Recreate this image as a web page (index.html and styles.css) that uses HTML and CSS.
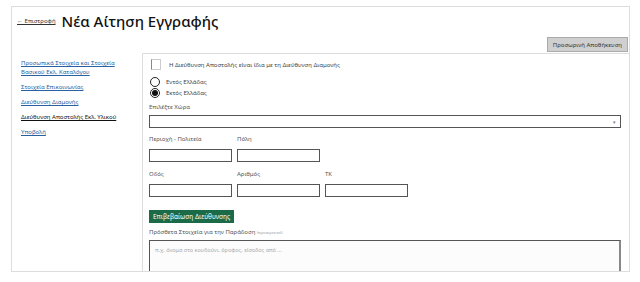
FILE: index.html
```html
<!DOCTYPE html>
<html lang="el">
<head>
  <meta charset="UTF-8">
  <title>Νέα Αίτηση Εγγραφής</title>
  <link rel="stylesheet" href="styles.css">
</head>
<body>
  <div class="pagina">
    <div class="cabecera">
      <a class="volver" href="#">← Επιστροφή</a>
      <h1>Νέα Αίτηση Εγγραφής</h1>
    </div>
    <div class="acciones">
      <button class="guardar" type="button">Προσωρινή Αποθήκευση</button>
    </div>
    <div class="cuerpo">
      <nav class="menu">
        <a href="#">Προσωπικά Στοιχεία και Στοιχεία<br>Βασικού Εκλ. Καταλόγου</a>
        <a href="#">Στοιχεία Επικοινωνίας</a>
        <a href="#">Διεύθυνση Διαμονής</a>
        <a href="#" class="activo">Διεύθυνση Αποστολής Εκλ. Υλικού</a>
        <a href="#">Υποβολή</a>
      </nav>
      <form class="formulario">
        <label class="opcion">
          <span class="casilla"></span>
          Η Διεύθυνση Αποστολής είναι ίδια με τη Διεύθυνση Διαμονής
        </label>
        <label class="opcion">
          <span class="radio"></span>
          Εντός Ελλάδας
        </label>
        <label class="opcion">
          <span class="radio marcado"></span>
          Εκτός Ελλάδας
        </label>

        <div class="etiqueta">Επιλέξτε Χώρα</div>
        <div class="selector"><span class="flecha">▾</span></div>

        <div class="fila">
          <div class="campo">
            <div class="etiqueta">Περιοχή - Πολιτεία</div>
            <div class="caja"></div>
          </div>
          <div class="campo">
            <div class="etiqueta">Πόλη</div>
            <div class="caja"></div>
          </div>
        </div>

        <div class="fila">
          <div class="campo">
            <div class="etiqueta">Οδός</div>
            <div class="caja"></div>
          </div>
          <div class="campo">
            <div class="etiqueta">Αριθμός</div>
            <div class="caja"></div>
          </div>
          <div class="campo">
            <div class="etiqueta">ΤΚ</div>
            <div class="caja"></div>
          </div>
        </div>

        <button class="confirmar" type="button">Επιβεβαίωση Διεύθυνσης</button>

        <div class="etiqueta">Πρόσθετα Στοιχεία για την Παράδοση <small>(προαιρετικό)</small></div>
        <div class="texto">π.χ. όνομα στο κουδούνι, όροφος, είσοδος από ...</div>
      </form>
    </div>
  </div>
</body>
</html>
```

FILE: styles.css
```css
body {
  margin: 0;
  font-family: "Noto Sans", sans-serif;
  color: #222;
  background: #fff;
}

.pagina {
  margin: 6px 0 0 11px;
  width: 619px;
  height: 266px;
  border: 1px solid #ddd;
  overflow: hidden;
  box-sizing: border-box;
}

.cabecera {
  display: flex;
  align-items: center;
  padding: 2px 0 0 5px;
  height: 24px;
}

.volver {
  font-size: 6px;
  color: #333;
  margin-right: 6px;
}

h1 {
  margin: 0;
  font-size: 15px;
  font-weight: 500;
  color: #111;
}

.acciones {
  display: flex;
  justify-content: flex-end;
  padding: 4px 1px 0 0;
}

.guardar {
  font-family: inherit;
  font-size: 6px;
  color: #333;
  background: #cfcfcf;
  border: 1px solid #aaa;
  height: 15px;
  padding: 0 5px;
}

.cuerpo {
  display: flex;
  margin-top: 1px;
}

.menu {
  width: 130px;
  flex: none;
  padding: 6px 0 0 9px;
  box-sizing: border-box;
  display: flex;
  flex-direction: column;
  gap: 6px;
}

.menu a {
  font-size: 6px;
  line-height: 9px;
  color: #2a5fa0;
}

.menu a.activo {
  color: #111;
}

.formulario {
  flex: 1;
  border-top: 1px solid #ddd;
  border-left: 1px solid #ddd;
  padding: 5px 8px 0 6px;
  font-size: 6px;
}

.opcion {
  display: flex;
  align-items: center;
  gap: 6px;
  height: 11px;
  color: #444;
}

.opcion:first-child {
  margin-bottom: 6px;
}

.casilla {
  width: 8px;
  height: 9px;
  border: 1px solid #ccc;
  border-left-color: #888;
  margin: 0 2px;
}

.radio {
  width: 8px;
  height: 8px;
  border: 1px solid #222;
  border-radius: 50%;
  margin-left: 1px;
  display: flex;
  align-items: center;
  justify-content: center;
}

.radio.marcado::after {
  content: "";
  width: 6px;
  height: 6px;
  border-radius: 50%;
  background: #111;
}

.etiqueta {
  color: #555;
  font-size: 6px;
  margin: 5px 0 4px;
}

.etiqueta small {
  font-size: 4px;
  color: #999;
}

.selector {
  height: 13px;
  border: 1px solid #555;
  box-sizing: border-box;
  display: flex;
  justify-content: flex-end;
  align-items: center;
  padding-right: 4px;
  margin-bottom: 3px;
}

.flecha {
  font-size: 5px;
  color: #777;
}

.fila {
  display: flex;
  gap: 5px;
  margin-bottom: 4px;
}

.campo {
  width: 83px;
}

.campo .etiqueta {
  margin: 4px 0 6px;
}

.caja {
  height: 13px;
  border: 1px solid #555;
  box-sizing: border-box;
}

.confirmar {
  font-family: inherit;
  font-size: 6.5px;
  color: #fff;
  background: #1c6b48;
  border: none;
  height: 13px;
  padding: 0 4px;
  margin-top: 9px;
}

.texto {
  height: 40px;
  border: 1px solid #555;
  border-right: 2px solid #888;
  background: #fcfcfc;
  color: #aaa;
  font-size: 5.5px;
  padding: 5px;
  box-sizing: border-box;
}
```
